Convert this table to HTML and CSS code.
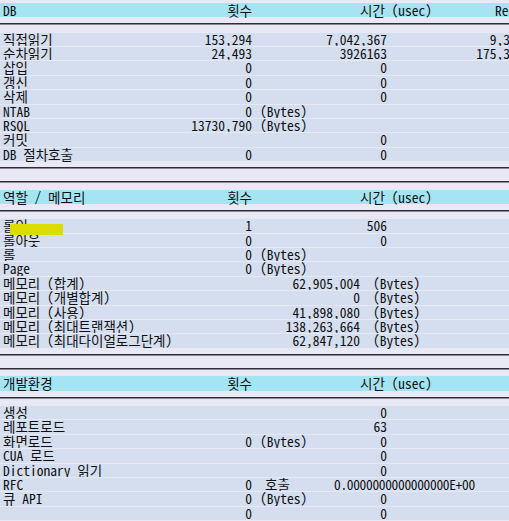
FILE: index.html
```html
<!DOCTYPE html>
<html lang="ko">
<head>
<meta charset="utf-8">
<title>통계</title>
<link rel="stylesheet" href="styles.css">
</head>
<body>
<div class="list">
  <div class="row hdr"><span class="lbl">DB</span><span class="cnt">횟수</span><span class="htime">시간 (usec)</span><span class="hre">Re</span></div>
  <div class="rule"></div>
  <div class="row"><span class="lbl">직접읽기</span><span class="cnt">153,294</span><span class="time">7,042,367</span><span class="re">9,3</span></div>
  <div class="row"><span class="lbl">순차읽기</span><span class="cnt">24,493</span><span class="time">3926163</span><span class="re">175,3</span></div>
  <div class="row"><span class="lbl">삽입</span><span class="cnt">0</span><span class="time">0</span></div>
  <div class="row"><span class="lbl">갱신</span><span class="cnt">0</span><span class="time">0</span></div>
  <div class="row"><span class="lbl">삭제</span><span class="cnt">0</span><span class="time">0</span></div>
  <div class="row"><span class="lbl">NTAB</span><span class="cnt">0</span><span class="unit">(Bytes)</span></div>
  <div class="row"><span class="lbl">RSQL</span><span class="cnt">13730,790</span><span class="unit">(Bytes)</span></div>
  <div class="row"><span class="lbl">커밋</span><span class="time">0</span></div>
  <div class="row"><span class="lbl">DB 절차호출</span><span class="cnt">0</span><span class="time">0</span></div>
  <div class="rule"></div>
  <div class="rule"></div>

  <div class="row hdr"><span class="lbl">역할 / 메모리</span><span class="cnt">횟수</span><span class="htime">시간 (usec)</span></div>
  <div class="rule"></div>
  <div class="row"><span class="lbl">롤인</span><span class="cnt">1</span><span class="time">506</span><span class="mark"></span></div>
  <div class="row"><span class="lbl">롤아웃</span><span class="cnt">0</span><span class="time">0</span></div>
  <div class="row"><span class="lbl">롤</span><span class="cnt">0</span><span class="unit">(Bytes)</span></div>
  <div class="row"><span class="lbl">Page</span><span class="cnt">0</span><span class="unit">(Bytes)</span></div>
  <div class="row"><span class="lbl">메모리 (합계)</span><span class="mval">62,905,004</span><span class="munit">(Bytes)</span></div>
  <div class="row"><span class="lbl">메모리 (개별합계)</span><span class="mval">0</span><span class="munit">(Bytes)</span></div>
  <div class="row"><span class="lbl">메모리 (사용)</span><span class="mval">41,898,080</span><span class="munit">(Bytes)</span></div>
  <div class="row"><span class="lbl">메모리 (최대트랜잭션)</span><span class="mval">138,263,664</span><span class="munit">(Bytes)</span></div>
  <div class="row"><span class="lbl">메모리 (최대다이얼로그단계)</span><span class="mval">62,847,120</span><span class="munit">(Bytes)</span></div>
  <div class="rule"></div>
  <div class="rule"></div>

  <div class="row hdr"><span class="lbl">개발환경</span><span class="cnt">횟수</span><span class="htime">시간 (usec)</span></div>
  <div class="rule"></div>
  <div class="row"><span class="lbl">생성</span><span class="time">0</span></div>
  <div class="row"><span class="lbl">레포트로드</span><span class="time">63</span></div>
  <div class="row"><span class="lbl">화면로드</span><span class="cnt">0</span><span class="unit">(Bytes)</span><span class="time">0</span></div>
  <div class="row"><span class="lbl">CUA 로드</span><span class="time">0</span></div>
  <div class="row"><span class="lbl">Dictionary 읽기</span><span class="time">0</span></div>
  <div class="row"><span class="lbl">RFC</span><span class="cnt">0</span><span class="call">호출</span><span class="float">0.0000000000000000E+00</span></div>
  <div class="row"><span class="lbl">큐 API</span><span class="cnt">0</span><span class="unit">(Bytes)</span><span class="time">0</span></div>
  <div class="row"><span class="cnt">0</span><span class="time">0</span></div>
</div>
</body>
</html>
```

FILE: styles.css
```css
html, body {
  margin: 0;
  padding: 0;
  overflow: hidden;
  background: #e9e9f5;
}

.list {
  width: 509px;
  padding-top: 3px;
  font-family: "Noto Sans Mono CJK KR", "Noto Sans CJK KR", "DejaVu Sans Mono", monospace;
  font-size: 13.5px;
  color: #111;
}

.row {
  position: relative;
  display: grid;
  grid-template-columns: 177px 72px 8px 74px 26px 13px 14px 107px 15px;
  height: 14.36px;
  box-sizing: border-box;
  padding-left: 3px;
  border-top: 1px solid #e4e9f3;
  background: #d4deee;
  line-height: 13.36px;
  white-space: nowrap;
}

.row > span {
  grid-row: 1;
}

.hdr {
  background: #a5e4f2;
  border-top: 0;
  line-height: 14.36px;
}

.rule {
  height: 14.36px;
  box-sizing: border-box;
  padding-top: 6px;
}

.rule::before {
  content: "";
  display: block;
  height: 1px;
  background: #2e2e36;
  border-bottom: 1px solid #8a8a96;
}

.lbl {
  grid-column: 1 / 4;
  justify-self: start;
}

.cnt {
  grid-column: 2 / 3;
  justify-self: end;
}

.unit {
  grid-column: 4 / 9;
  justify-self: start;
}

.time {
  grid-column: 4 / 8;
  justify-self: end;
}

.mval {
  grid-column: 2 / 6;
  justify-self: end;
}

.munit {
  grid-column: 7 / 9;
  justify-self: start;
}

.call {
  grid-column: 4 / 6;
  justify-self: start;
  padding-left: 5px;
}

.float {
  grid-column: 5 / 10;
  justify-self: start;
  letter-spacing: -0.35px;
}

.re {
  grid-column: 8 / 10;
  justify-self: end;
  margin-right: -1px;
}

.htime {
  grid-column: 6 / 10;
  justify-self: start;
}

.hre {
  grid-column: 9 / 10;
  justify-self: start;
  padding-left: 1px;
}

.mark {
  position: absolute;
  z-index: 1;
  left: 10px;
  top: 5px;
  width: 53px;
  height: 11px;
  background: #dcdc00;
}
```
